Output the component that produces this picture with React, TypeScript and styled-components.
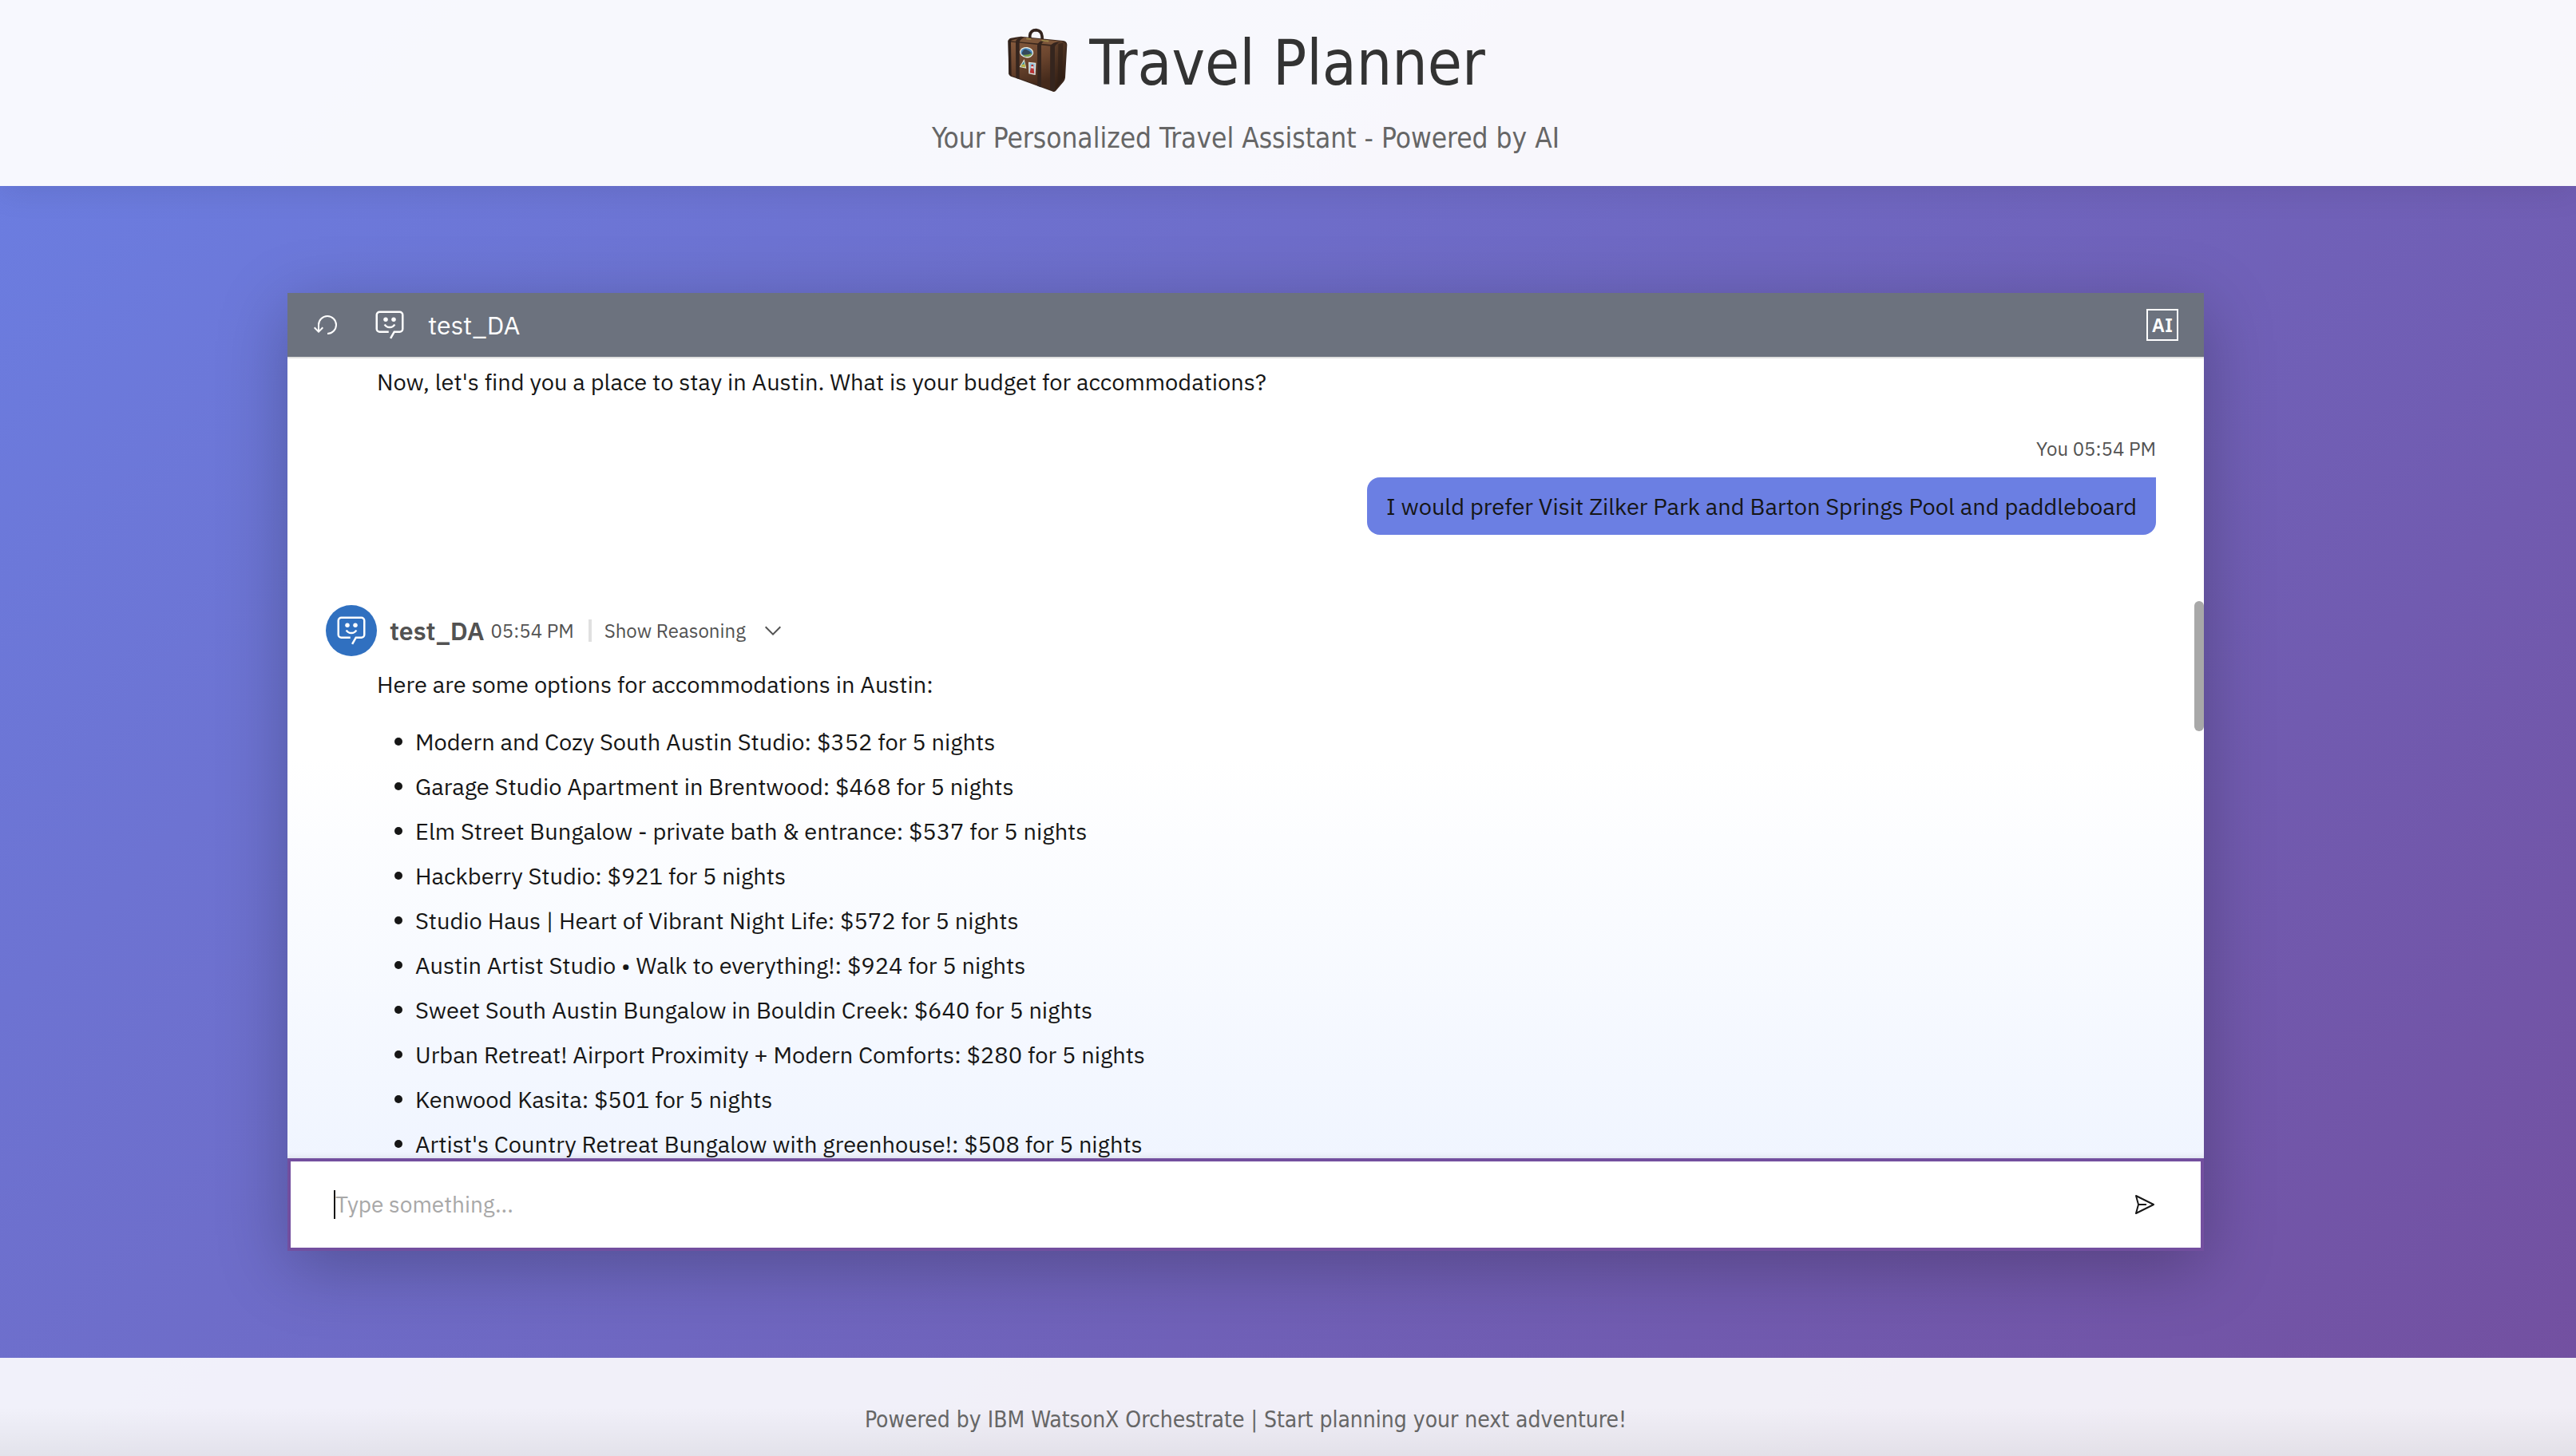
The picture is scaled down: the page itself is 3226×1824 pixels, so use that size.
import React from 'react';
import styled, { createGlobalStyle } from 'styled-components';

const plex = '"IBM Plex Sans", "Noto Sans", "Noto Sans CJK SC", sans-serif';
const tahoma = '"DejaVu Sans Condensed", "DejaVu Sans", sans-serif';

const GlobalStyle = createGlobalStyle`
  *, *::before, *::after { box-sizing: border-box; }
  body { margin: 0; }
  h1, h2, p, ul { margin: 0; padding: 0; font-weight: 400; }
  button { border: 0; padding: 0; background: none; color: inherit; font: inherit; cursor: pointer; }
  svg { display: block; flex: none; }
`;

const Page = styled.div`
  display: flex;
  flex-direction: column;
  height: 100vh;
  min-height: 1200px;
  background: linear-gradient(135deg, #6b7fe3 0%, #734f9f 100%);
  font-family: ${plex};
  font-variant-ligatures: none;
  color: #161616;
`;

const Header = styled.header`
  display: flex;
  flex-direction: column;
  align-items: center;
  gap: 28px;
  padding: 32px 106px 40px 0;
  background: rgba(255, 255, 255, 0.95);
  box-shadow: 0 4px 40px rgba(0, 0, 0, 0.1);
  font-family: ${tahoma};
`;

const Title = styled.h1`
  display: flex;
  align-items: center;
  gap: 24px;
  font-size: 78px;
  line-height: 94px;
  color: #333;
`;

const Subtitle = styled.p`
  font-size: 35px;
  line-height: 39px;
  color: #666;
`;

const Main = styled.main`
  display: flex;
  flex: 1;
  justify-content: center;
  min-height: 0;
  padding: 134px 106px 134px 0;
`;

const Panel = styled.section`
  display: flex;
  flex-direction: column;
  width: 100%;
  max-width: 2400px;
  min-height: 0;
  background: #fff;
  box-shadow: 0 20px 80px rgba(0, 0, 0, 0.25);
`;

const PanelBar = styled.div`
  display: flex;
  align-items: center;
  flex: none;
  padding: 20px 32px;
  border-bottom: 2px solid #e0e0e0;
  background: #6c727e;
  color: #fff;
`;

const BotMark = styled.span`
  display: flex;
  margin: 0 28px 0 44px;
`;

const BarTitle = styled.h2`
  flex: 1;
  font-size: 32px;
  line-height: 40px;
`;

const AiTag = styled.button`
  display: flex;
  align-items: center;
  justify-content: center;
  width: 40px;
  height: 40px;
  border: 2px solid #fff;
  font-size: 24px;
  font-weight: 600;
  line-height: 32px;
`;

const Viewport = styled.div`
  position: relative;
  flex: 1;
  min-height: 0;
  overflow: hidden;
  padding: 9px 60px 0 48px;
  background: linear-gradient(180deg, #fff 50%, #f0f5ff 100%);
  box-shadow: inset 0 -8px 8px -8px rgba(0, 0, 0, 0.12);
`;

const Thumb = styled.div`
  position: absolute;
  top: 304px;
  right: 0;
  width: 12px;
  height: 163px;
  border-radius: 6px;
  background: #a8a8a8;
`;

const BotText = styled.p`
  padding-left: 64px;
  font-size: 29px;
  line-height: 40px;
`;

const Meta = styled.span`
  font-size: 24px;
  line-height: 32px;
  color: #525252;
`;

const UserMessage = styled.article`
  display: flex;
  flex-direction: column;
  align-items: flex-end;
  gap: 20px;
  margin: 48px 0 88px;
`;

const Bubble = styled.p`
  padding: 16px 24px;
  border-radius: 16px 0 16px 16px;
  background: #6b7fe3;
  font-size: 29px;
  line-height: 40px;
`;

const BotHeader = styled.div`
  display: flex;
  align-items: center;
  margin-bottom: 15px;
`;

const Avatar = styled.span`
  display: flex;
  align-items: center;
  justify-content: center;
  width: 64px;
  height: 64px;
  margin-right: 16px;
  border-radius: 50%;
  background: #3070c0;
  color: #fff;
`;

const BotName = styled.strong`
  margin-right: 8px;
  font-size: 32px;
  font-weight: 600;
  line-height: 40px;
  color: #525252;
`;

const Divider = styled.span`
  width: 4px;
  height: 28px;
  margin: 0 16px 0 18px;
  background: #e0e0e0;
`;

const Reasoning = styled.button`
  display: flex;
  align-items: center;
  gap: 18px;
  font-size: 24px;
  line-height: 32px;
  color: #525252;
`;

const Options = styled.ul`
  display: flex;
  flex-direction: column;
  gap: 16px;
  margin-top: 32px;
  padding-left: 86px;
  list-style: none;
`;

const Option = styled.li`
  display: flex;
  align-items: center;
  gap: 16px;
  font-size: 29px;
  line-height: 40px;

  &::before {
    content: '';
    width: 10px;
    height: 10px;
    border-radius: 50%;
    background: #161616;
  }
`;

const Composer = styled.form`
  display: flex;
  align-items: center;
  flex: none;
  height: 116px;
  padding: 0 54px;
  border: 4px solid #734f9f;
  background: #fff;
`;

const Caret = styled.span`
  width: 2px;
  height: 36px;
  background: #161616;
`;

const TextBox = styled.input`
  flex: 1;
  min-width: 0;
  padding: 0;
  border: 0;
  outline: 0;
  background: none;
  font-family: ${plex};
  font-size: 28px;
  line-height: 40px;
  color: #161616;
  caret-color: transparent;

  &::placeholder {
    color: #a8a8a8;
    opacity: 1;
  }
`;

const Footer = styled.footer`
  flex: none;
  padding: 62px 106px 29px 0;
  background:
    linear-gradient(180deg, rgba(0, 0, 0, 0) 50%, rgba(0, 0, 0, 0.06) 100%),
    rgba(255, 255, 255, 0.9);
  font-family: ${tahoma};
  font-size: 28px;
  line-height: 32px;
  text-align: center;
  color: #666;
`;

const options = [
  'Modern and Cozy South Austin Studio: $352 for 5 nights',
  'Garage Studio Apartment in Brentwood: $468 for 5 nights',
  'Elm Street Bungalow - private bath & entrance: $537 for 5 nights',
  'Hackberry Studio: $921 for 5 nights',
  'Studio Haus | Heart of Vibrant Night Life: $572 for 5 nights',
  'Austin Artist Studio • Walk to everything!: $924 for 5 nights',
  'Sweet South Austin Bungalow in Bouldin Creek: $640 for 5 nights',
  'Urban Retreat! Airport Proximity + Modern Comforts: $280 for 5 nights',
  'Kenwood Kasita: $501 for 5 nights',
  "Artist's Country Retreat Bungalow with greenhouse!: $508 for 5 nights",
];

const Suitcase = () => (
  <svg width="80" height="88" viewBox="90 45 240 264" aria-hidden="true">
    <defs>
      <linearGradient id="leather" x1="0" y1="0" x2="0.3" y2="1">
        <stop offset="0" stopColor="#84593c" />
        <stop offset="0.5" stopColor="#6b452e" />
        <stop offset="1" stopColor="#452a1b" />
      </linearGradient>
      <linearGradient id="side" x1="0" y1="0" x2="0.4" y2="1">
        <stop offset="0" stopColor="#60402b" />
        <stop offset="1" stopColor="#2c1a11" />
      </linearGradient>
    </defs>
    <path d="M180 90 L179 74 Q182 53 203 53 Q223 55 225 76 L226 92" fill="none" stroke="#33241e" strokeWidth="11" />
    <path d="M98 96 Q97 86 108 83 L146 77 L304 93 Q318 95 319 108 L312 232 Q311 240 306 247 L276 282 Q270 287 262 283 L108 227 Q100 224 100 214 Z" fill="#3a271d" />
    <path d="M104 94 L150 80 L306 96 L262 108 Z" fill="#7d563a" />
    <path d="M107 98 L257 113 L255 276 L108 223 Z" fill="url(#leather)" />
    <path d="M272 112 Q282 100 302 98 Q314 99 315 110 L308 232 L274 278 Z" fill="url(#side)" />
    <path d="M286 106 L304 101 L300 240 L284 260 Z" fill="#2f1f17" opacity="0.6" />
    <path d="M126 96 Q127 84 150 80 L157 82 Q140 88 140 102 L140 238 L127 233 Z" fill="#35251e" />
    <path d="M207 110 Q210 96 232 90 L241 91 Q223 98 222 110 L222 268 L208 263 Z" fill="#35251e" />
    <path d="M256 114 Q260 98 300 95 Q276 102 273 116 L273 282 L256 276 Z" fill="#35251e" />
    <path d="M97 92 L110 88 Q107 98 108 104 L110 226 L100 219 Z" fill="#2e201a" />
    <path d="M166 85 L184 87 M223 92 L250 95" stroke="#a08a4c" strokeWidth="5" />
    <ellipse cx="167" cy="137" rx="26" ry="20" fill="#e8eadf" transform="rotate(8 167 137)" />
    <ellipse cx="167" cy="137" rx="22" ry="16" fill="#4d8ac0" transform="rotate(8 167 137)" />
    <path d="M148 141 Q156 122 166 126 Q178 130 187 142 Q178 155 160 151 Z" fill="#34485c" />
    <path d="M152 146 Q170 148 187 140 Q184 153 168 153 Q158 152 152 146 Z" fill="#7da347" />
    <path d="M158 162 L166 197 L140 192 Z" fill="#dfe3cf" />
    <path d="M157 170 L162 193 L145 190 Z" fill="#3c8f9c" />
    <path d="M150 183 L160 181 L162 193 L146 190 Z" fill="#c3b53d" />
    <path d="M174 173 L202 176 L200 222 L175 217 Z" fill="#e6e6e2" />
    <path d="M178 177 L198 179 L196 217 L179 214 Z" fill="#8ec3dc" />
    <path d="M185 182 L192 183 L196 217 L179 214 Z" fill="#b93434" />
    <path d="M184 189 L193 190 L194 197 L183 196 Z" fill="#f2dede" />
  </svg>
);

const BotIcon = () => (
  <svg width="40" height="40" viewBox="0 0 32 32" aria-hidden="true">
    <path
      fill="currentColor"
      d="M17.74 30 16 29l4-7h6a2 2 0 0 0 2-2V6a2 2 0 0 0-2-2H6a2 2 0 0 0-2 2v14a2 2 0 0 0 2 2h9v2H6a4 4 0 0 1-4-4V6a4 4 0 0 1 4-4h20a4 4 0 0 1 4 4v14a4 4 0 0 1-4 4h-4.84Z"
    />
    <circle cx="12" cy="10.5" r="2.2" fill="currentColor" />
    <circle cx="20" cy="10.5" r="2.2" fill="currentColor" />
    <path d="M11 15.6Q12.5 18.4 16 18.4T21 15.6" fill="none" stroke="currentColor" strokeWidth="2" />
  </svg>
);

const RestartIcon = () => (
  <svg width="32" height="32" viewBox="0 0 32 32" aria-hidden="true">
    <path
      fill="currentColor"
      d="M18 28A12 12 0 1 0 6 16v6.2L2.4 18.6 1 20l6 6 6-6-1.4-1.4L8 22.2V16a10 10 0 1 1 10 10Z"
    />
  </svg>
);

const ChevronIcon = () => (
  <svg width="32" height="32" viewBox="0 0 32 32" aria-hidden="true">
    <path fill="currentColor" d="M16 22 6 12l1.4-1.4 8.6 8.6 8.6-8.6L26 12z" />
  </svg>
);

const SendIcon = () => (
  <svg width="32" height="32" viewBox="0 0 32 32" aria-hidden="true">
    <path
      fill="currentColor"
      d="m27.45 15.11-22-11a1 1 0 0 0-1.08.12 1 1 0 0 0-.33 1L7 16 4 26.74A1 1 0 0 0 5 28a1 1 0 0 0 .45-.11l22-11a1 1 0 0 0 0-1.78Zm-20.9 10L8.76 17H18v-2H8.76L6.55 6.89 24.76 16Z"
    />
  </svg>
);

export default function App() {
  return (
    <>
      <GlobalStyle />
      <Page>
        <Header>
          <Title>
            <Suitcase />
            Travel Planner
          </Title>
          <Subtitle>Your Personalized Travel Assistant - Powered by AI</Subtitle>
        </Header>
        <Main>
          <Panel>
            <PanelBar>
              <button type="button" aria-label="Restart conversation">
                <RestartIcon />
              </button>
              <BotMark>
                <BotIcon />
              </BotMark>
              <BarTitle>test_DA</BarTitle>
              <AiTag type="button">AI</AiTag>
            </PanelBar>
            <Viewport>
              <BotText>
                Now, let's find you a place to stay in Austin. What is your budget for accommodations?
              </BotText>
              <UserMessage>
                <Meta>You 05:54 PM</Meta>
                <Bubble>I would prefer Visit Zilker Park and Barton Springs Pool and paddleboard</Bubble>
              </UserMessage>
              <BotHeader>
                <Avatar>
                  <BotIcon />
                </Avatar>
                <BotName>test_DA</BotName>
                <Meta>05:54 PM</Meta>
                <Divider />
                <Reasoning type="button">
                  Show Reasoning
                  <ChevronIcon />
                </Reasoning>
              </BotHeader>
              <BotText>Here are some options for accommodations in Austin:</BotText>
              <Options>
                {options.map((option) => (
                  <Option key={option}>{option}</Option>
                ))}
              </Options>
              <Thumb />
            </Viewport>
            <Composer onSubmit={(event) => event.preventDefault()}>
              <Caret />
              <TextBox type="text" aria-label="Message" placeholder="Type something..." />
              <button type="submit" aria-label="Send">
                <SendIcon />
              </button>
            </Composer>
          </Panel>
        </Main>
        <Footer>Powered by IBM WatsonX Orchestrate | Start planning your next adventure!</Footer>
      </Page>
    </>
  );
}
